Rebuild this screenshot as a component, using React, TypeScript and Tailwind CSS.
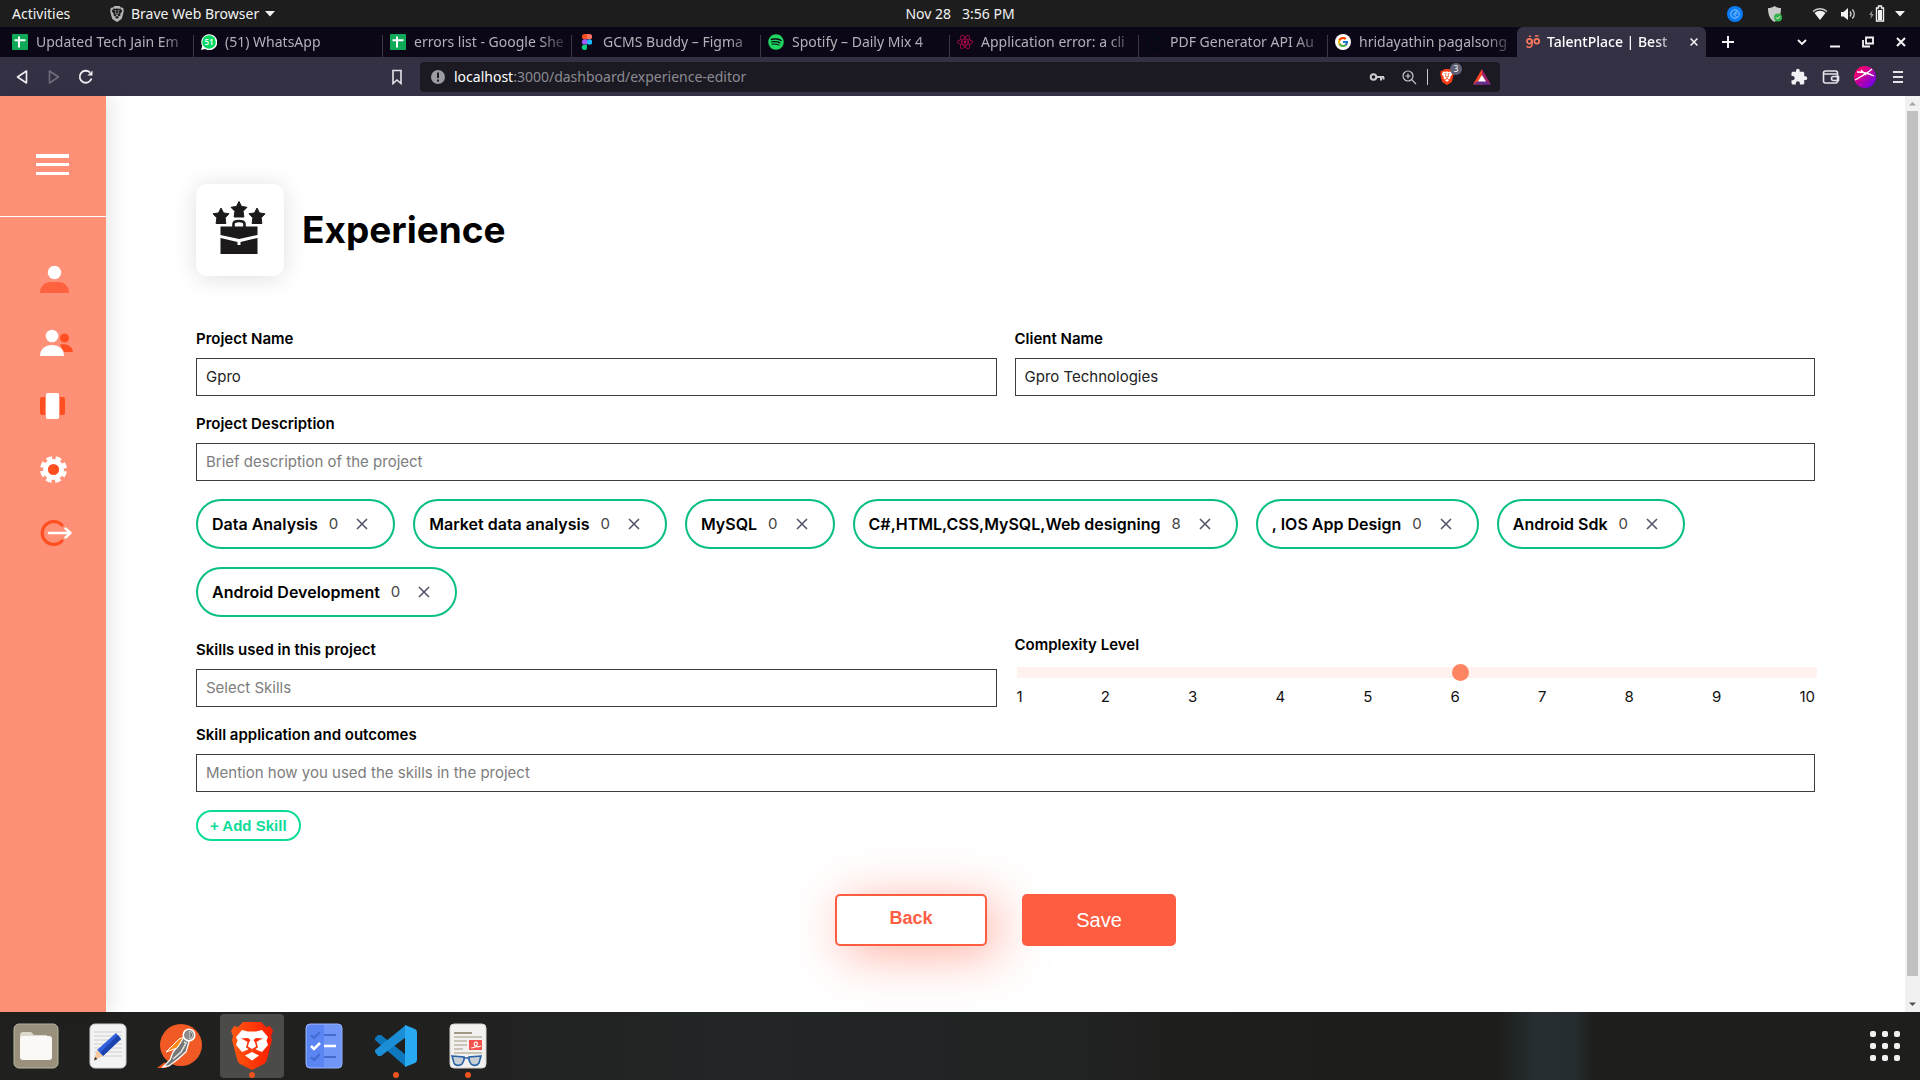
import { useState } from "react";
import type { ReactNode } from "react";
import { FcGoogle } from "react-icons/fc";
import { FaSpotify, FaReact } from "react-icons/fa";
import { MdExtension } from "react-icons/md";
import { SiBrave } from "react-icons/si";

function SheetIcon() {
  return (
    <svg width="16" height="16" viewBox="0 0 16 16" aria-hidden="true">
      <rect width="16" height="16" rx="1" fill="#0fa958" />
      <path d="M2.5 6.2h11M7 2.5v11" stroke="#fff" strokeWidth="2" />
    </svg>
  );
}

function WhatsAppIcon() {
  return (
    <span className="relative flex size-4 items-center justify-center">
      <svg width="16" height="16" viewBox="0 0 16 16" aria-hidden="true">
        <path d="M0 16l1.2-4A8 8 0 1 1 4 15z" fill="#fff" />
        <circle cx="8" cy="8" r="6.8" fill="#00d95f" />
      </svg>
      <span className="absolute text-[8px] font-semibold text-white">51</span>
    </span>
  );
}

function FigmaIcon() {
  return (
    <svg width="16" height="16" viewBox="0 0 16 16" aria-hidden="true">
      <path d="M8 0H5.6a2.65 2.65 0 0 0 0 5.3H8z" fill="#f24e1e" />
      <path d="M8 0h2.4a2.65 2.65 0 0 1 0 5.3H8z" fill="#ff7262" />
      <path d="M8 5.3H5.6a2.65 2.65 0 0 0 0 5.3H8z" fill="#a259ff" />
      <circle cx="10.5" cy="8" r="2.65" fill="#1abcfe" />
      <path d="M8 10.7H5.6A2.65 2.65 0 1 0 8 13.4z" fill="#0acf83" />
    </svg>
  );
}

function PdfIcon() {
  return (
    <svg width="16" height="16" viewBox="0 0 16 16" fill="none" stroke="#030a14" strokeWidth="1.6" aria-hidden="true">
      <path d="M2 1h8l4 4v10H2zM10 1v4h4M5 12c2-2 3-4 3-6 0 3 2 4 4 4" />
    </svg>
  );
}

function TalentIcon() {
  return (
    <svg width="16" height="16" viewBox="0 0 16 16" fill="none" stroke="#ff7a5c" strokeWidth="1.7" strokeLinecap="round" aria-hidden="true">
      <circle cx="4.4" cy="7.2" r="2.4" />
      <circle cx="11.8" cy="7.2" r="2.4" />
      <path d="M7 6v5c0 2.4-3.400 2.800-5 1.600M4.500 2.200h1M10.500 2h2.500" strokeWidth="1.5" />
    </svg>
  );
}

const tabs: { title: string; icon: ReactNode }[] = [
  { title: "Updated Tech Jain Em", icon: <SheetIcon /> },
  { title: "(51) WhatsApp", icon: <WhatsAppIcon /> },
  { title: "errors list - Google She", icon: <SheetIcon /> },
  { title: "GCMS Buddy – Figma", icon: <FigmaIcon /> },
  { title: "Spotify – Daily Mix 4", icon: <FaSpotify className="size-4 text-[#1ed760]" /> },
  { title: "Application error: a cli", icon: <FaReact className="size-4 text-[#c2084f]" /> },
  { title: "PDF Generator API Au", icon: <PdfIcon /> },
  {
    title: "hridayathin pagalsong",
    icon: (
      <span className="flex size-4 items-center justify-center rounded-full bg-white">
        <FcGoogle className="size-3" />
      </span>
    ),
  },
];

function CaretDown() {
  return (
    <svg width="10" height="6" viewBox="0 0 10 6" fill="#f2f2f2" aria-hidden="true">
      <path d="M0 0h10L5 5.5z" />
    </svg>
  );
}

function SystemBar() {
  return (
    <header className="grid h-[27px] shrink-0 grid-cols-3 items-center bg-[#1d1d1d] pr-[15px] pl-[15px] text-sm text-[#f2f2f2]">
      <div className="-ml-[3px] flex items-center">
        <button type="button" className="w-[97px] text-left">Activities</button>
        <button type="button" className="flex items-center gap-1.5">
          <SiBrave className="size-4 text-[#b5b5b5]" />
          Brave Web Browser
          <CaretDown />
        </button>
      </div>
      <div className="flex justify-center gap-[11px]">
        <span>Nov 28</span>
        <span>3:56 PM</span>
      </div>
      <div className="flex items-center justify-end">
        <svg width="16" height="16" viewBox="0 0 16 16" fill="none" className="mr-6" aria-hidden="true">
          <circle cx="8" cy="8" r="8" fill="#0a7cf5" />
          <circle cx="8" cy="8" r="4.2" stroke="#8ec5ff" />
          <path d="M10 5L6.5 8l3 3M8 8l2.500-1" stroke="#8ec5ff" />
        </svg>
        <svg width="16" height="16" viewBox="0 0 16 16" className="mr-[29px]" aria-hidden="true">
          <path d="M7.500 0c2 1.500 4 2 6.500 2 0 7-2 11.500-6.500 14C3 13.500 1 9 1 2c2.500 0 4.500-.5 6.500-2z" fill="#c9c9c9" />
          <circle cx="11" cy="11.500" r="4" fill="#35b24a" />
          <path d="M9.200 11.500l1.300 1.400 2.400-2.600" stroke="#fff" fill="none" />
        </svg>
        <svg width="16" height="14" viewBox="0 0 16 14" className="mr-3" aria-hidden="true">
          <path d="M1 4.500C5 .8 11 .8 15 4.500" fill="none" stroke="#ccc" strokeWidth="1.500" />
          <path d="M2.500 6c3.500-3 7.500-3 11 0L8 13z" fill="#f2f2f2" />
        </svg>
        <svg width="16" height="14" viewBox="0 0 16 14" className="mr-3" aria-hidden="true">
          <path d="M1 5h2.500L8 1v12L3.500 9.500H1z" fill="#f2f2f2" />
          <path d="M10 4.500c1.200 1.500 1.200 3.500 0 5M12.300 2.500c2.600 2.500 2.600 6.500 0 9" fill="none" stroke="#cfcfcf" strokeWidth="1.300" />
        </svg>
        <svg width="17" height="18" viewBox="0 0 17 18" className="mr-2.5" aria-hidden="true">
          <path d="M4.500 5L1 10h2l-.5 4L6 9H4z" fill="#8a8a8a" />
          <path d="M10.500 1h3v2h2v13h-7V3h2z" fill="none" stroke="#f2f2f2" strokeWidth="1.400" />
          <rect x="10" y="5" width="4" height="10" fill="#f2f2f2" />
        </svg>
        <CaretDown />
      </div>
    </header>
  );
}

function WindowButton({ label, children, className }: { label: string; children: ReactNode; className?: string }) {
  return (
    <button type="button" aria-label={label} className={className}>
      <svg width="14" height="14" viewBox="0 0 14 14" fill="none" stroke="#f5f5f5" strokeWidth="1.8" aria-hidden="true">
        {children}
      </svg>
    </button>
  );
}

function TabStrip() {
  return (
    <nav aria-label="Tabs" className="flex h-[30px] shrink-0 items-stretch bg-[#0c0716] pr-3 pl-[5px] text-sm">
      {tabs.map((tab, i) => (
        <button key={tab.title} type="button" className="flex w-[189px] items-center text-[#b3b1b8]">
          <span className="flex min-w-0 flex-1 items-center gap-2 pl-[7px]">
            <span className="shrink-0">{tab.icon}</span>
            <span className="min-w-0 flex-1 overflow-hidden text-left whitespace-nowrap [mask-image:linear-gradient(to_right,black_80%,transparent)]">
              {tab.title}
            </span>
          </span>
          {i < tabs.length - 1 && <span className="h-[22px] w-px self-end bg-[#3b3843]" />}
        </button>
      ))}
      <div className="flex w-[189px] items-center gap-1.5 rounded-t-md bg-[#343145] pr-1.5 pl-2 font-medium text-white">
        <TalentIcon />
        <span className="min-w-0 flex-1 overflow-hidden whitespace-nowrap [mask-image:linear-gradient(to_right,black_80%,transparent)]">
          TalentPlace | Best
        </span>
        <WindowButton label="Close tab" className="flex size-3 items-center justify-center">
          <path d="M3 3l8 8M11 3l-8 8" />
        </WindowButton>
      </div>
      <div className="flex flex-1 items-center">
        <WindowButton label="New tab" className="mr-auto ml-[15px]">
          <path d="M7 1v12M1 7h12" strokeWidth="2" />
        </WindowButton>
        <div className="flex gap-[19px]">
          <WindowButton label="Search tabs">
            <path d="M3 5l4 4 4-4" />
          </WindowButton>
          <WindowButton label="Minimise">
            <path d="M2 11.500h10" strokeWidth="2" />
          </WindowButton>
          <WindowButton label="Restore">
            <path d="M5 2.500h7v6H5zM2 5v6.500h7" />
          </WindowButton>
          <WindowButton label="Close">
            <path d="M3 3l8 8M11 3l-8 8" strokeWidth="2" />
          </WindowButton>
        </div>
      </div>
    </nav>
  );
}

function Toolbar() {
  return (
    <div className="flex h-[39px] shrink-0 items-center bg-[#343145] pr-[14px] pl-[14px]">
      <div className="flex items-center gap-4">
        <button type="button" aria-label="Back">
          <svg width="16" height="16" viewBox="0 0 16 16" fill="none" stroke="#f0f0f3" strokeWidth="1.600" strokeLinejoin="round" aria-hidden="true">
            <path d="M12.500 2v12L3.500 8z" />
          </svg>
        </button>
        <button type="button" aria-label="Forward">
          <svg width="16" height="16" viewBox="0 0 16 16" fill="none" stroke="#6f6c7d" strokeWidth="1.600" strokeLinejoin="round" aria-hidden="true">
            <path d="M3.500 2v12l9-6z" />
          </svg>
        </button>
        <button type="button" aria-label="Reload">
          <svg width="16" height="16" viewBox="0 0 16 16" fill="none" stroke="#f0f0f3" strokeWidth="1.800" aria-hidden="true">
            <path d="M13.500 9.500A6 6 0 1 1 12 3.500" />
            <path d="M14.500 1.500v5h-5z" fill="#f0f0f3" stroke="none" />
          </svg>
        </button>
      </div>
      <button type="button" aria-label="Bookmark" className="ml-[295px]">
        <svg width="16" height="16" viewBox="0 0 16 16" fill="none" stroke="#e4e4e8" strokeWidth="1.600" aria-hidden="true">
          <path d="M4 1.500h8v13l-4-3.500-4 3.500z" />
        </svg>
      </button>
      <div className="ml-[15px] flex h-[30px] w-[1080px] items-center rounded bg-[#1b1a23] pr-[9px] pl-2.5 text-sm text-[#8c8b92]">
        <svg width="16" height="16" viewBox="0 0 16 16" className="mr-2" aria-hidden="true">
          <circle cx="8" cy="8" r="7" fill="#9b9ba1" />
          <path d="M8 3.500v5.500M8 10.500v2" stroke="#1b1a23" strokeWidth="2" />
        </svg>
        <span className="flex-1">
          <span className="text-white">localhost</span>:3000/dashboard/experience-editor
        </span>
        <svg width="16" height="16" viewBox="0 0 16 16" fill="none" stroke="#c9c9ce" aria-hidden="true">
          <circle cx="4.500" cy="8" r="2.800" strokeWidth="2" />
          <path d="M7.500 8H15M12 8v3.500M14.500 8v2.500" strokeWidth="2" />
        </svg>
        <svg width="16" height="16" viewBox="0 0 16 16" fill="none" stroke="#c9c9ce" strokeWidth="1.200" className="ml-4" aria-hidden="true">
          <circle cx="7" cy="7" r="5" />
          <path d="M10.700 10.700L15 15M7 4.500v5M4.500 7h5" />
        </svg>
        <span className="mx-2.5 h-4 w-px bg-[#c9c9ce]" />
        <span className="relative flex h-4 w-[18px] items-center justify-center">
          <span className="absolute h-3 w-2.5 rounded-b bg-white" />
          <SiBrave className="relative size-4 text-[#fb3b14]" />
          <span className="absolute -top-1.5 left-3 flex size-3 items-center justify-center rounded-full bg-[#5f6275] text-[8px] text-white">3</span>
        </span>
        <svg width="18" height="16" viewBox="0 0 18 16" className="ml-[17px]" aria-hidden="true">
          <path d="M9 0L0 15.500h9z" fill="#ff4724" />
          <path d="M9 0l9 15.500H9z" fill="#9e1f63" />
          <path d="M0 15.500L5 12h8l5 3.500z" fill="#662d91" />
          <path d="M9 6l-4 6.500h8z" fill="#fff" />
        </svg>
      </div>
      <div className="ml-auto flex items-center gap-[14px]">
        <button type="button" aria-label="Extensions">
          <MdExtension className="size-[18px] text-[#f0f0f3]" />
        </button>
        <button type="button" aria-label="Wallet">
          <svg width="18" height="16" viewBox="0 0 18 16" fill="none" stroke="#e4e4e8" strokeWidth="1.600" aria-hidden="true">
            <rect x="1.500" y="2" width="14" height="12" rx="2" />
            <path d="M2 5h13M16.500 7.500h-5a2 2 0 0 0 0 4h5z" />
          </svg>
        </button>
        <button type="button" aria-label="Profile">
          <svg width="22" height="22" viewBox="0 0 22 22" aria-hidden="true">
            <defs>
              <linearGradient id="avatar" x1="0" y1="0" x2="1" y2="1">
                <stop offset=".2" stopColor="#f5006e" />
                <stop offset=".9" stopColor="#6f00f0" />
              </linearGradient>
            </defs>
            <circle cx="11" cy="11" r="11" fill="url(#avatar)" />
            <path d="M3 6c5 0 11 1 17 4M18 3C14 7 8 10 1 14M7 4l5 5" stroke="#fff" strokeWidth="1.300" fill="none" />
          </svg>
        </button>
        <button type="button" aria-label="Menu">
          <svg width="16" height="16" viewBox="0 0 16 16" stroke="#e4e4e8" strokeWidth="1.800" aria-hidden="true">
            <path d="M3 3h10M3 8h10M3 13h10" />
          </svg>
        </button>
      </div>
    </div>
  );
}

function Sidebar() {
  return (
    <aside className="relative z-10 flex w-[106px] shrink-0 flex-col bg-[#ff9078] shadow-[4px_0_20px_rgba(0,0,0,0.11)]">
      <div className="flex h-[121px] items-start border-b border-white pt-[58px] pl-9">
        <button type="button" aria-label="Menu">
          <svg width="33" height="21" viewBox="0 0 33 21" fill="#fff" aria-hidden="true">
            <path d="M0 0h33v4H0zM0 9h33v3H0zM0 18h33v3H0z" />
          </svg>
        </button>
      </div>
      <nav aria-label="Dashboard" className="flex flex-col gap-[31px] pt-[46px] pl-10">
        <a href="#profile" aria-label="Profile">
          <svg width="34" height="32" viewBox="0 0 34 32" aria-hidden="true">
            <circle cx="14.500" cy="9.500" r="6.700" fill="#fff" />
            <path d="M0 30c0-7 5-11 10-11h9c5 0 10 4 10 11z" fill="#ff623f" />
          </svg>
        </a>
        <a href="#team" aria-label="Team">
          <svg width="34" height="32" viewBox="0 0 34 32" aria-hidden="true">
            <circle cx="24.500" cy="12" r="4.500" fill="#ff4f20" />
            <path d="M20 18.500c7-1 12 1.500 13 7.500h-9z" fill="#ff4f20" />
            <circle cx="12" cy="10" r="6.300" fill="#fff" />
            <path d="M0 30c0-7 5-11 12-11s12 4 12 11z" fill="#fff" />
          </svg>
        </a>
        <a href="#boards" aria-label="Boards">
          <svg width="34" height="32" viewBox="0 0 34 32" aria-hidden="true">
            <rect y="8" width="25" height="18" rx="2" fill="#ff4f20" />
            <rect x="5" y="3.500" width="15" height="27" rx="2" fill="#ff9078" />
            <rect x="6" y="4" width="13" height="26" rx="1.500" fill="#fff" />
          </svg>
        </a>
        <a href="#settings" aria-label="Settings">
          <svg width="34" height="32" viewBox="0 -1 34 32" aria-hidden="true">
            <circle cx="13.500" cy="16.500" r="10.500" fill="#fff" />
            <circle cx="13.500" cy="16.500" r="11.700" fill="none" stroke="#fff" strokeWidth="3.500" strokeDasharray="5.600 3.590" strokeDashoffset="-1.800" />
            <circle cx="13.500" cy="16.500" r="5.600" fill="#ff4f20" />
          </svg>
        </a>
        <a href="#logout" aria-label="Log out">
          <svg width="34" height="32" viewBox="0 -1 34 32" fill="none" strokeLinecap="round" strokeLinejoin="round" aria-hidden="true">
            <path d="M22 9A11.500 11.500 0 1 0 22 25" stroke="#ff4f20" strokeWidth="3.200" />
            <path d="M9 17h21M25.500 12.500L30.500 17l-5 4.500" stroke="#fff" strokeWidth="2.400" />
          </svg>
        </a>
      </nav>
    </aside>
  );
}

function BriefcaseIcon() {
  const star = "M0-8.500l2.500 4.900 5.500.9-3.900 4 .8 5.700H-4.900l.8-5.700-3.900-4 5.500-.9z";
  return (
    <svg width="54" height="54" viewBox="0 0 54 54" fill="#1b191a" stroke="#1b191a" aria-hidden="true">
      <path transform="translate(9 15.500)" d={star} strokeLinejoin="round" />
      <path transform="translate(27 9)" d={star} strokeLinejoin="round" />
      <path transform="translate(45 15.500)" d={star} strokeLinejoin="round" />
      <path d="M21.500 26v-3c0-2 2-3 5.500-3s5.500 1 5.500 3v3" fill="none" strokeWidth="2.600" />
      <path d="M8.500 25.500h37V34L27 38 8.500 34z" stroke="none" />
      <path d="M8.500 37L25.500 41v3h3v-3l17-4v16h-37z" stroke="none" />
    </svg>
  );
}

const fieldInput =
  "h-[38px] w-full border border-[#3d3d3d] bg-white px-[9px] pb-0.5 text-[15px] text-[#222] outline-none placeholder:text-[#7d7d7d]";

const fieldLabel = "block text-[15px] leading-[21px] font-semibold text-black";

function Field({ id, label, placeholder, value }: { id: string; label: string; placeholder?: string; value?: string }) {
  return (
    <div className="flex flex-col gap-[9px]">
      <label htmlFor={id} className={fieldLabel}>
        {label}
      </label>
      <input id={id} type="text" placeholder={placeholder} defaultValue={value} className={fieldInput} />
    </div>
  );
}

const initialSkills = [
  { name: "Data Analysis", level: 0 },
  { name: "Market data analysis", level: 0 },
  { name: "MySQL", level: 0 },
  { name: "C#,HTML,CSS,MySQL,Web designing", level: 8 },
  { name: ", IOS App Design", level: 0 },
  { name: "Android Sdk", level: 0 },
  { name: "Android Development", level: 0 },
];

const levels = [1, 2, 3, 4, 5, 6, 7, 8, 9, 10];

function ExperienceForm() {
  const [skills, setSkills] = useState(initialSkills);
  return (
    <main className="min-w-0 flex-1 overflow-hidden bg-white px-[90px] pt-[88px] font-[Inter,sans-serif]">
      <div className="flex items-center gap-[18px]">
        <div className="flex h-[92px] w-[88px] items-center justify-center rounded-[10px] bg-white pr-0.5 pb-1 shadow-[0_2px_24px_rgba(0,0,0,0.13)]">
          <BriefcaseIcon />
        </div>
        <h1 className="text-[37px] leading-10 font-bold text-black">Experience</h1>
      </div>
      <form className="mt-[52px]" onSubmit={(e) => e.preventDefault()}>
        <div className="grid grid-cols-2 gap-x-[18px] gap-y-[17px]">
          <Field id="project" label="Project Name" value="Gpro" />
          <Field id="client" label="Client Name" value="Gpro Technologies" />
          <div className="col-span-2">
            <Field id="description" label="Project Description" placeholder="Brief description of the project" />
          </div>
        </div>
        <ul className="mt-[18px] flex flex-wrap gap-[18px]">
          {skills.map((skill) => (
            <li key={skill.name} className="flex h-[50px] items-center rounded-full border-2 border-[#0abf84] pr-6 pl-3.5">
              <span className="text-base font-semibold whitespace-pre text-black">{skill.name}</span>
              <span className="ml-[11px] text-[15px] text-[#444]">{skill.level}</span>
              <button
                type="button"
                aria-label={`Remove ${skill.name}`}
                className="ml-[17px]"
                onClick={() => setSkills(skills.filter((s) => s !== skill))}
              >
                <svg width="14" height="14" viewBox="0 0 14 14" stroke="#55556a" strokeWidth="1.600" aria-hidden="true">
                  <path d="M2 2l10 10M12 2L2 12" />
                </svg>
              </button>
            </li>
          ))}
        </ul>
        <div className="mt-[22px] grid grid-cols-2 gap-x-[18px]">
          <Field id="skills" label="Skills used in this project" placeholder="Select Skills" />
          <div className="-mt-[5px]">
            <label htmlFor="complexity" className={fieldLabel}>
              Complexity Level
            </label>
            <div className="-mr-0.5 ml-0.5 pt-[9px]">
              <input
                id="complexity"
                type="range"
                min={1}
                max={10}
                defaultValue={6}
                className="block h-[17px] w-full appearance-none bg-transparent [&::-webkit-slider-runnable-track]:h-[11px] [&::-webkit-slider-runnable-track]:bg-[#fff1ed] [&::-webkit-slider-thumb]:-mt-[3px] [&::-webkit-slider-thumb]:size-[17px] [&::-webkit-slider-thumb]:appearance-none [&::-webkit-slider-thumb]:rounded-full [&::-webkit-slider-thumb]:bg-[#ff8562]"
              />
              <div className="flex justify-between pt-1.5 pr-0.5 text-[15px] leading-5 text-[#111]">
                {levels.map((n) => (
                  <span key={n}>{n}</span>
                ))}
              </div>
            </div>
          </div>
        </div>
        <div className="mt-[17px]">
          <Field id="outcomes" label="Skill application and outcomes" placeholder="Mention how you used the skills in the project" />
        </div>
        <button
          type="button"
          className="mt-[18px] block h-[31px] rounded-full border-2 border-[#0bdc98] px-3 font-['Liberation_Sans',sans-serif] text-[15px] leading-none font-bold text-[#0bdc98]"
        >
          + Add Skill
        </button>
        <div className="mt-[53px] flex justify-center gap-[35px] font-['Liberation_Sans',sans-serif]">
          <button
            type="button"
            className="h-[52px] w-[152px] rounded-[5px] border-2 border-[#ff5d41] bg-white pb-1 text-lg font-bold text-[#ff5d41] shadow-[10px_8px_50px_rgba(255,93,65,0.5)]"
          >
            Back
          </button>
          <button type="submit" className="relative h-[52px] w-[154px] rounded-[5px] bg-[#ff5d41] text-xl text-white">
            Save
          </button>
        </div>
      </form>
    </main>
  );
}

function Scrollbar() {
  return (
    <div className="flex w-[15px] shrink-0 flex-col items-center bg-[#f1f1f1]" aria-hidden="true">
      <svg width="15" height="15" viewBox="0 0 15 15" fill="#a3a3a3">
        <path d="M4 9.500h7L7.500 6z" />
      </svg>
      <div className="w-[11px] flex-1 bg-[#c1c1c1]" />
      <div className="h-[21px]" />
      <svg width="15" height="15" viewBox="0 0 15 15" fill="#505050">
        <path d="M4 5.500h7L7.500 9z" />
      </svg>
    </div>
  );
}

const dockApps: { name: string; icon: ReactNode; active?: boolean; running?: boolean }[] = [
  {
    name: "Files",
    icon: (
      <>
        <rect x="2" y="2" width="44" height="44" rx="5" fill="#9a917d" stroke="#bbb4a3" />
        <path d="M8 13q0-3 3-3h8l3 3h13v8H8z" fill="#ddd8ce" />
        <rect x="8" y="14" width="32" height="24" rx="3" fill="#faf9f7" />
      </>
    ),
  },
  {
    name: "Text Editor",
    icon: (
      <>
        <rect x="6" y="2" width="36" height="44" rx="5" fill="#f3f3f4" stroke="#d3d3d8" />
        <path d="M10 10h28M10 14h28M10 18h28M10 22h28M10 26h28M10 30h28M10 34h28" stroke="#cfcfd2" />
        <path d="M32 11l5 6-18 17-6-6z" fill="#2f5fdc" />
        <path d="M34 13l3 4-18 17-3-3z" fill="#1d43ae" />
        <path d="M13 28l6 6-9 4z" fill="#f7c9a0" />
        <path d="M11 35l2.500 2L10 38.500z" fill="#333" />
      </>
    ),
  },
  {
    name: "Postman",
    icon: (
      <>
        <circle cx="25" cy="23" r="21" fill="#f15a24" />
        <path d="M1 46l8-6 2 6z" fill="#f15a24" />
        <path d="M28 15l5 5-3 10-8 7-9 7-6 1 7-7 3-8 5-6z" fill="#777" stroke="#fff" strokeWidth="1.300" />
        <path d="M10 30l13-13 5-2-7 11z" fill="#ff8c1a" stroke="#fff" />
        <path d="M28 20l2 1-5 9-8 7" fill="none" stroke="#e6e6e6" strokeWidth="1.500" />
        <circle cx="33" cy="13" r="5.800" fill="#8c8c8c" stroke="#fff" strokeWidth="1.500" />
        <path d="M34 9c3 2 3 6 0 8z" fill="#333" stroke="#ddd" />
      </>
    ),
  },
  {
    name: "Brave",
    active: true,
    running: true,
    icon: (
      <>
        <defs>
          <linearGradient id="brave">
            <stop offset="0" stopColor="#ff5a12" />
            <stop offset="1" stopColor="#ff1c00" />
          </linearGradient>
        </defs>
        <path d="M15 0h18l5 5 4-1 3 5-2 5 1 4-5 19c-1 4-3 5-5 6l-10 5-10-5c-2-1-4-2-5-6L4 18l1-4-2-5 3-5 4 1z" fill="url(#brave)" />
        <path d="M14 8l6 1.500h8L34 8l6 7-1.500 3.500L40 23l-6 7-5-2-3-2h-4l-3 2-5 2-6-7 1.500-4.500L8 15z" fill="#fff" />
        <path d="M20 20h8v6l-4 3-4-3z" fill="#fff" />
        <path d="M13 16.500l7-.5 2.500 2-1.500 2.500zM35 16.500l-7-.5-2.500 2 1.500 2.500z" fill="#fb3008" />
        <path d="M20.500 19l-1.500 6 5 3 5-3-1.500-6" fill="none" stroke="#fb3008" strokeWidth="1.600" />
        <path d="M24 30l7 3.500-7 5-7-5z" fill="#fff" />
      </>
    ),
  },
  {
    name: "To Do",
    icon: (
      <>
        <rect x="6" y="2" width="36" height="44" rx="4" fill="#7097f8" stroke="#91aef9" />
        <path d="M7 6q0-3 3-3h14v42H10q-3 0-3-3z" fill="#5b85f2" />
        <path d="M11 13l3 3 6-6M11 35l3 3 6-6M24 13h12M24 35h12" fill="none" stroke="#466bd0" strokeWidth="2.200" />
        <path d="M11 24l3 3 6-6M24 24h12" fill="none" stroke="#fff" strokeWidth="2.500" />
      </>
    ),
  },
  {
    name: "Visual Studio Code",
    running: true,
    icon: (
      <>
        <path d="M3 16l3-3h3l25 20v12L3 18z" fill="#0e77be" />
        <path d="M3 30l3 4h3l25-19V3L3 28z" fill="#1b8fd6" />
        <path d="M33 3l10 4q2 1 2 3v28q0 2-2 3l-10 4z" fill="#2aa9f3" />
      </>
    ),
  },
  {
    name: "Document Viewer",
    running: true,
    icon: (
      <>
        <rect x="6" y="2" width="36" height="44" rx="4" fill="#f2f1ef" stroke="#d6d4d0" />
        <path d="M10 11h18" stroke="#a39a85" strokeWidth="2" />
        <path d="M10 15h28M10 19h13M10 23h13M10 27h9M10 31h28" stroke="#c9c4b6" strokeWidth="2" />
        <rect x="25" y="18" width="13" height="10" fill="#f4514c" />
        <path d="M27 26c6 0 8-6 5-6s-3 7 5 4" fill="none" stroke="#fff" strokeWidth="1.200" />
        <path d="M8 34l12 1v3l-2 4c-2 2-7 2-8-1zM37 34l-12 1v3l2 4c2 2 6 2 8-1zM20 36h5" fill="#b7c1ca" fillOpacity=".7" stroke="#2a62a8" strokeWidth="1.600" />
      </>
    ),
  },
];

function Dock() {
  return (
    <footer className="flex h-[68px] shrink-0 items-center justify-between bg-[#20201e] bg-[linear-gradient(90deg,transparent_20%,#222626_38%,#212323_56%,#1e1e1c_62%,#1d1d1b_78%,#262e31_80%,#252d30_82%,#1e1e1c_83%)] pr-5 pl-1">
      <div className="flex gap-2">
        {dockApps.map((app) => (
          <button
            key={app.name}
            type="button"
            aria-label={app.name}
            className={
              app.active
                ? "relative flex size-16 items-center justify-center rounded bg-[#4b4b49]"
                : "relative flex size-16 items-center justify-center rounded"
            }
          >
            <svg width="48" height="48" viewBox="0 0 48 48" aria-hidden="true">
              {app.icon}
            </svg>
            {app.running && <span className="absolute bottom-0 size-1.5 rounded-full bg-[#e95420]" />}
          </button>
        ))}
      </div>
      <button type="button" aria-label="Show applications" className="grid grid-cols-3 gap-1.5">
        {levels.slice(0, 9).map((n) => (
          <span key={n} className="size-1.5 rounded-xs bg-[#f2f2f2]" />
        ))}
      </button>
    </footer>
  );
}

export default function App() {
  return (
    <div className="flex h-screen flex-col overflow-hidden bg-white font-['Noto_Sans',sans-serif]">
      <SystemBar />
      <TabStrip />
      <Toolbar />
      <div className="flex min-h-0 flex-1">
        <Sidebar />
        <ExperienceForm />
        <Scrollbar />
      </div>
      <Dock />
    </div>
  );
}
